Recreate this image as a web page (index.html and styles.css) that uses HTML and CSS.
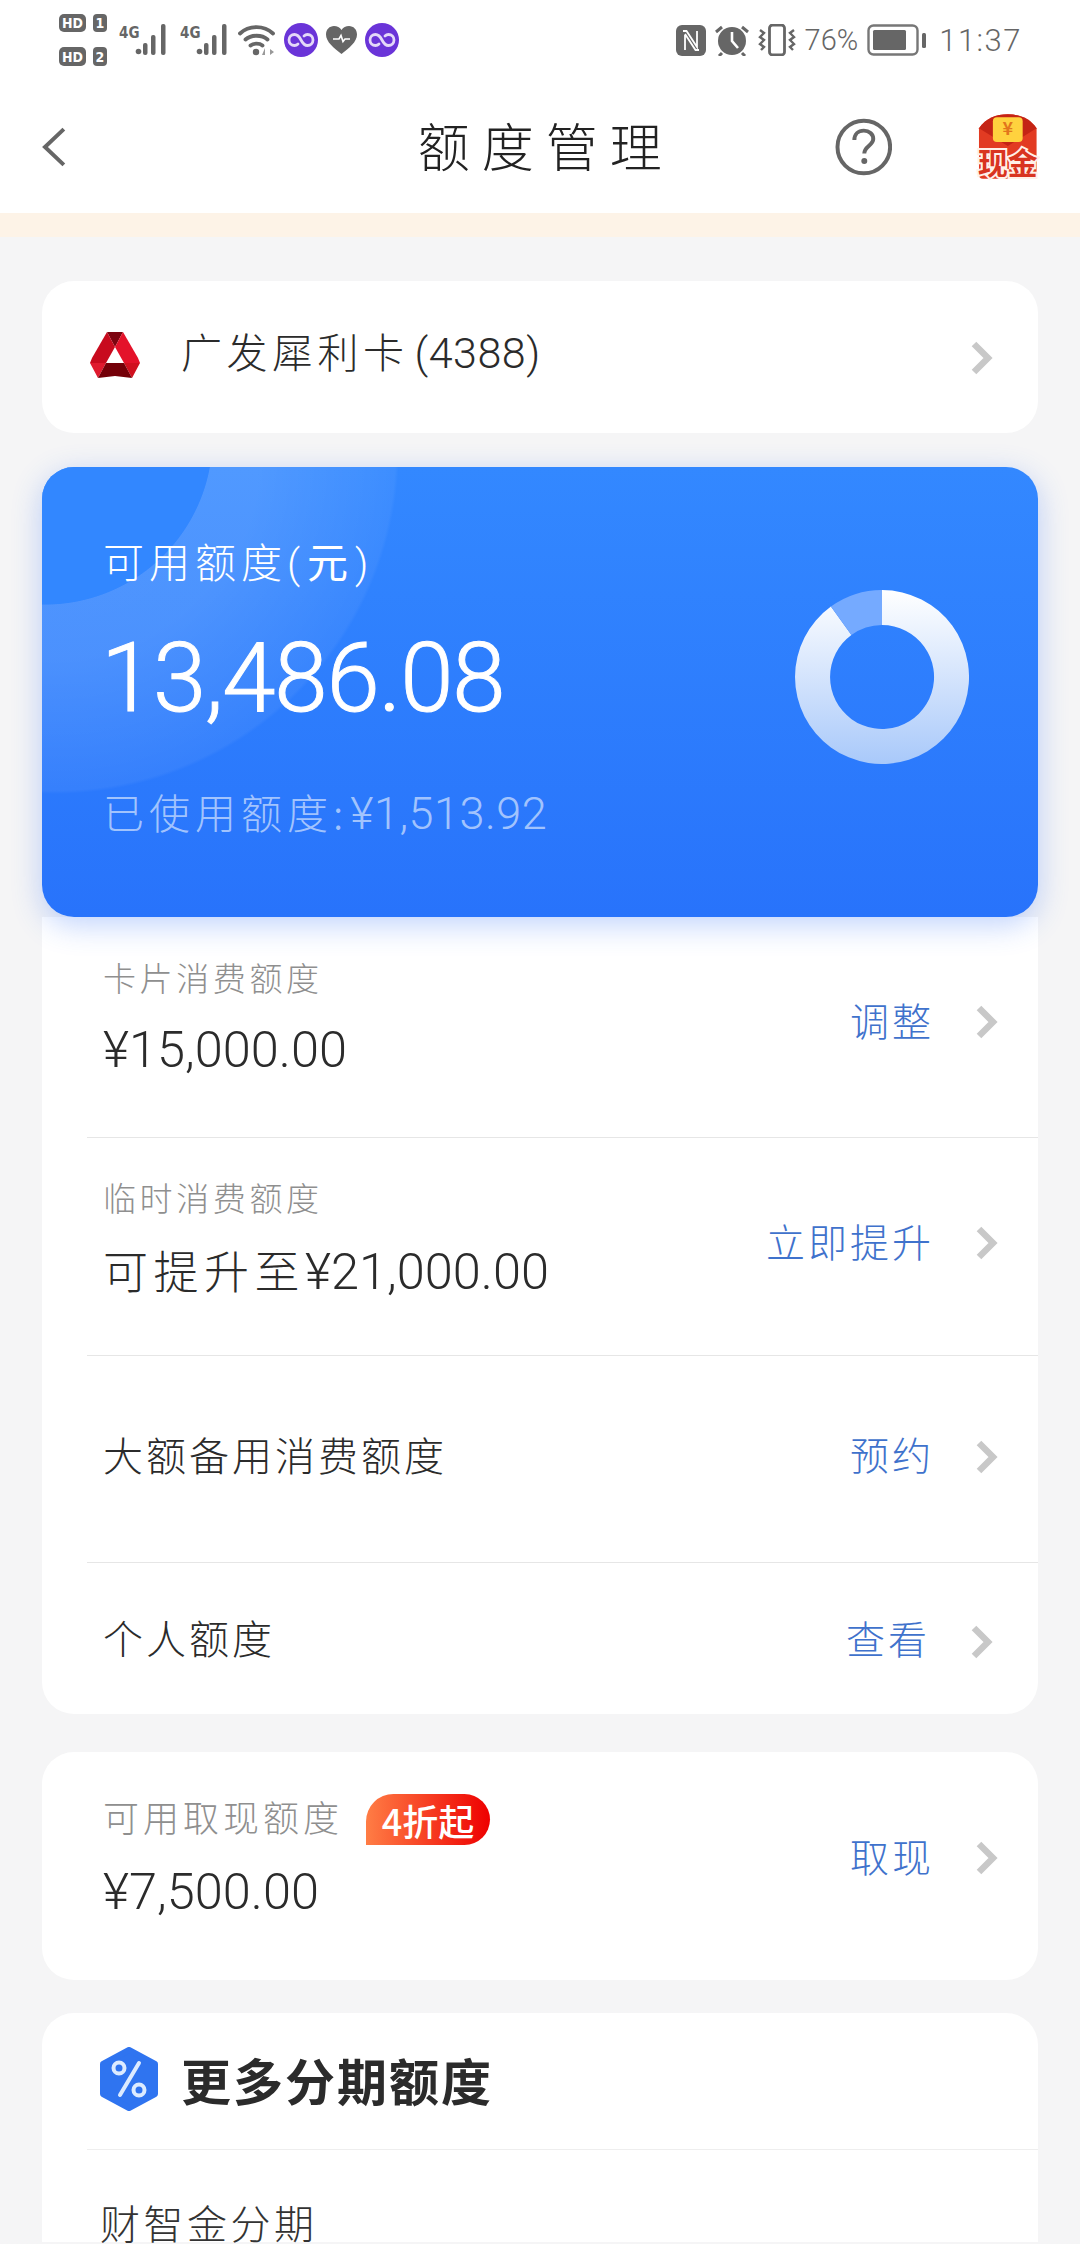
FILE: index.html
```html
<!DOCTYPE html>
<html lang="zh-CN">
<head>
	<meta charset="UTF-8">
	<title>额度管理</title>
	<meta name="viewport" content="width=device-width, initial-scale=1">
	<link rel="stylesheet" href="styles.css">
</head>
<body>
<div class="status">
	<div class="status-left">
		<svg class="ic-sim" width="50" height="54" viewBox="0 0 50 54">
			<rect x="0" y="1" width="27" height="18" rx="5" fill="#666"/>
			<rect x="34" y="1" width="14" height="18" rx="4" fill="#666"/>
			<rect x="0" y="34" width="27" height="19" rx="5" fill="#666"/>
			<rect x="34" y="34" width="14" height="19" rx="4" fill="#666"/>
			<text x="13.5" y="15" class="sim-text">HD</text>
			<text x="41" y="15" class="sim-text">1</text>
			<text x="13.5" y="49" class="sim-text">HD</text>
			<text x="41" y="49" class="sim-text">2</text>
		</svg>
		<svg class="ic-signal" width="50" height="32" viewBox="0 0 50 32">
			<text x="0" y="14" class="net-text">4G</text>
			<circle cx="19.500" cy="27.500" r="2.800" fill="#666"/>
			<rect x="24" y="19" width="4.500" height="12" rx="2" fill="#666"/>
			<rect x="32" y="11" width="4.500" height="20" rx="2" fill="#666"/>
			<rect x="42" y="0" width="4.500" height="31" rx="2" fill="#666"/>
		</svg>
		<svg class="ic-signal ic-signal-2" width="50" height="32" viewBox="0 0 50 32">
			<text x="0" y="14" class="net-text">4G</text>
			<circle cx="19.500" cy="27.500" r="2.800" fill="#666"/>
			<rect x="24" y="19" width="4.500" height="12" rx="2" fill="#666"/>
			<rect x="32" y="11" width="4.500" height="20" rx="2" fill="#666"/>
			<rect x="42" y="0" width="4.500" height="31" rx="2" fill="#666"/>
		</svg>
		<svg class="ic-wifi" width="38" height="32" viewBox="0 0 38 32">
			<g fill="none" stroke="#666" stroke-width="3.800" stroke-linecap="round">
				<path d="M2 9.500C11 1 26 1 35 9.500"/>
				<path d="M7.500 15.500C13 10.500 24 10.500 29.500 15.500"/>
				<path d="M12.500 21.500C15.500 19 21.500 19 24.500 21.500"/>
			</g>
			<circle cx="18" cy="28" r="3.200" fill="#666"/>
			<path d="M27 31V24l-3 7zM32 25v6l4-3z" fill="#999"/>
		</svg>
		<svg class="ic-loop" width="34" height="34" viewBox="0 0 34 34">
			<circle cx="17" cy="17" r="17" fill="#6a34d8"/>
			<path d="M17 17c-2-4-4-5.500-6.500-5.500a5.500 5.500 0 0 0 0 11c1.500 0 2.500-.5 3.500-1.500M17 17c2 4 4 5.500 6.500 5.500a5.500 5.500 0 0 0 0-11c-1.500 0-2.500.5-3.500 1.500" fill="none" stroke="#e4d8f8" stroke-width="2.800" stroke-linecap="round"/>
		</svg>
		<svg class="ic-heart" width="31" height="28" viewBox="0 0 31 28">
			<path d="M15.500 28C8 22 0 16 0 8.500 0 3.500 3.500 0 8 0c3 0 6 1.500 7.500 4C17 1.500 20 0 23 0c4.500 0 8 3.500 8 8.500C31 16 23 22 15.500 28z" fill="#666"/>
			<path d="M7 13h6l2-3.500 2 6 2-2.500h5" fill="none" stroke="#fff" stroke-width="1.600"/>
		</svg>
		<svg class="ic-loop" width="34" height="34" viewBox="0 0 34 34">
			<circle cx="17" cy="17" r="17" fill="#6a34d8"/>
			<path d="M17 17c-2-4-4-5.500-6.500-5.500a5.500 5.500 0 0 0 0 11c1.500 0 2.500-.5 3.500-1.500M17 17c2 4 4 5.500 6.500 5.500a5.500 5.500 0 0 0 0-11c-1.500 0-2.500.5-3.500 1.500" fill="none" stroke="#e4d8f8" stroke-width="2.800" stroke-linecap="round"/>
		</svg>
	</div>
	<div class="status-right">
		<svg width="30" height="31" viewBox="0 0 30 31">
			<rect width="30" height="31" rx="6" fill="#666"/>
			<path d="M7 6h3.500L21 22V6M9 25V10M23 25h-3.500L9 9" fill="none" stroke="#fff" stroke-width="1.800"/>
		</svg>
		<svg class="ic-alarm" width="34" height="32" viewBox="0 0 34 32">
			<circle cx="17" cy="17" r="14" fill="#666"/>
			<path d="M17 8v9l6 7" fill="none" stroke="#fff" stroke-width="2.600"/>
			<path d="M1 8l6-5M33 8l-6-5M7 29l-3 3M27 29l3 3" stroke="#666" stroke-width="3" fill="none"/>
		</svg>
		<svg class="ic-vibrate" width="38" height="32" viewBox="0 0 38 32">
			<rect x="11.500" y="1" width="15" height="30" rx="3" fill="none" stroke="#666" stroke-width="2.800"/>
			<path d="M2 6l4 3-4 4 4 3-4 4 4 3-3 3M36 6l-4 3 4 4-4 3 4 4-4 3 3 3" fill="none" stroke="#666" stroke-width="2.400"/>
		</svg>
		<span class="battery-pct">76%</span>
		<svg class="ic-battery" width="59" height="32" viewBox="0 0 59 32">
			<rect x="1.500" y="1.500" width="49" height="29" rx="5" fill="none" stroke="#777" stroke-width="2.400"/>
			<rect x="6" y="6" width="33" height="20" rx="1.500" fill="#666"/>
			<rect x="55" y="9" width="4" height="15" rx="1.500" fill="#666"/>
		</svg>
		<span class="clock">11:37</span>
	</div>
</div>

<header class="nav">
	<svg class="nav-back" width="24" height="40" viewBox="0 0 24 40">
		<path d="M22 2L3 20l19 18" fill="none" stroke="#666" stroke-width="4"/>
	</svg>
	<h1 class="nav-title">额度管理</h1>
	<svg class="nav-help" width="58" height="58" viewBox="0 0 58 58">
		<circle cx="29" cy="29" r="26.500" fill="none" stroke="#666" stroke-width="4"/>
		<path d="M19.500 22c0-6 4-9.500 9.500-9.500s9.500 3.500 9.500 8.500c0 6.500-9 7-9 14.500" fill="none" stroke="#666" stroke-width="4"/>
		<circle cx="29.500" cy="43" r="3" fill="#666"/>
	</svg>
	<svg class="nav-cash" width="64" height="72" viewBox="0 0 64 72">
		<path d="M3 14C10 4 20 0 32 0s22 4 29 14v47a4 4 0 0 1-4 4H7a4 4 0 0 1-4-4z" fill="#e23b22"/>
		<path d="M3 14C10 4 20 0 32 0s22 4 29 14L32 32z" fill="#c42415"/>
		<rect x="17" y="3" width="30" height="25" rx="4" fill="#ffd23e"/>
		<text x="32" y="21" class="cash-yen">¥</text>
		<text x="32" y="60" class="cash-text">现金</text>
	</svg>
</header>
<div class="notice"></div>

<main class="content">
	<section class="card card-bank">
		<svg class="bank-logo" width="50" height="46" viewBox="0 0 50 46">
			<path d="M17 0h16L25 15z" fill="#7d0410"/>
			<path d="M17 0l8 15-9 16H0l2-5z" fill="#c80b1e"/>
			<path d="M33 0l-8 15 9 16h16l-2-5z" fill="#e4122a"/>
			<path d="M0 31h16l-8 15z" fill="#e01a2e"/>
			<path d="M50 31H34l8 15z" fill="#d0101f"/>
			<path d="M16 31h18l8 15-17-2-17 2z" fill="#740008"/>
		</svg>
		<span class="bank-name">广发犀利卡<span class="bank-no">(4388)</span></span>
		<svg class="chevron" width="24" height="34" viewBox="0 0 24 34">
			<path d="M4 3l14 14L4 31" fill="none" stroke="#c8c8c8" stroke-width="6.500"/>
		</svg>
	</section>

	<section class="limit-card">
		<div class="limit-text">
			<p class="limit-label">可用额度<span class="paren">(元)</span></p>
			<p class="limit-amount">13,486.08</p>
			<p class="limit-used">已使用额度:<span class="num">¥1,513.92</span></p>
		</div>
		<svg class="donut" width="174" height="174" viewBox="0 0 174 174">
			<defs>
				<linearGradient id="donut-fill" x1="0" y1="0" x2="0" y2="1">
					<stop offset="0" stop-color="#fff"/>
					<stop offset="1" stop-color="#a9c9fa"/>
				</linearGradient>
			</defs>
			<path d="M87 0a87 87 0 1 1-51.100 16.600L56.400 45A52 52 0 1 0 87 35z" fill="url(#donut-fill)"/>
			<path d="M87 0a87 87 0 0 0-51.100 16.600L56.400 45A52 52 0 0 1 87 35z" fill="#75aaff"/>
		</svg>
	</section>

	<section class="card card-list">
		<div class="row row-a">
			<div class="row-text">
				<p class="row-label">卡片消费额度</p>
				<p class="row-value">¥15,000.00</p>
			</div>
			<span class="row-action">调整</span>
			<svg class="chevron" width="24" height="34" viewBox="0 0 24 34">
				<path d="M4 3l14 14L4 31" fill="none" stroke="#c8c8c8" stroke-width="6.500"/>
			</svg>
		</div>
		<div class="row row-b">
			<div class="row-text">
				<p class="row-label">临时消费额度</p>
				<p class="row-value"><span class="row-cjk">可提升至</span>¥21,000.00</p>
			</div>
			<span class="row-action">立即提升</span>
			<svg class="chevron" width="24" height="34" viewBox="0 0 24 34">
				<path d="M4 3l14 14L4 31" fill="none" stroke="#c8c8c8" stroke-width="6.500"/>
			</svg>
		</div>
		<div class="row row-c">
			<p class="row-title">大额备用消费额度</p>
			<span class="row-action">预约</span>
			<svg class="chevron" width="24" height="34" viewBox="0 0 24 34">
				<path d="M4 3l14 14L4 31" fill="none" stroke="#c8c8c8" stroke-width="6.500"/>
			</svg>
		</div>
		<div class="row row-d">
			<p class="row-title">个人额度</p>
			<span class="row-action">查看</span>
			<svg class="chevron" width="24" height="34" viewBox="0 0 24 34">
				<path d="M4 3l14 14L4 31" fill="none" stroke="#c8c8c8" stroke-width="6.500"/>
			</svg>
		</div>
	</section>

	<section class="card card-cash">
		<div class="row row-e">
			<div class="row-text">
				<p class="row-label row-label-big">可用取现额度<span class="badge">4折起</span></p>
				<p class="row-value">¥7,500.00</p>
			</div>
			<span class="row-action">取现</span>
			<svg class="chevron" width="24" height="34" viewBox="0 0 24 34">
				<path d="M4 3l14 14L4 31" fill="none" stroke="#c8c8c8" stroke-width="6.500"/>
			</svg>
		</div>
	</section>

	<section class="card card-more">
		<div class="more-head">
			<svg width="58" height="64" viewBox="0 0 58 64">
				<path d="M29 3L55 17v30L29 61 3 47V17z" fill="#2f74f0" stroke="#2f74f0" stroke-width="6" stroke-linejoin="round"/>
				<circle cx="19" cy="21" r="5.500" fill="none" stroke="#dcebff" stroke-width="4"/>
				<circle cx="39" cy="43" r="5.500" fill="none" stroke="#dcebff" stroke-width="4"/>
				<path d="M39 16L20 48" stroke="#dcebff" stroke-width="4" stroke-linecap="round"/>
			</svg>
			<h2 class="more-title">更多分期额度</h2>
		</div>
		<p class="more-item">财智金分期</p>
	</section>
</main>
</body>
</html>
```

FILE: styles.css
```css
* {
	box-sizing: border-box;
}
html,
body {
	margin: 0;
	height: 2244px;
	overflow: hidden;
}
body {
	background: #f5f5f6;
	color: #2b2b2b;
	font-family: Roboto, "Noto Sans CJK SC", sans-serif;
	font-weight: 300;
}
p,
h1,
h2 {
	margin: 0;
}

/* status bar */
.status {
	height: 72px;
	background: #fff;
	display: flex;
	justify-content: space-between;
	align-items: center;
	padding: 8px 58px 0 59px;
}
.status svg {
	display: block;
	flex: none;
}
.status-left,
.status-right {
	display: flex;
	align-items: center;
}
.status-left {
	gap: 8px;
}
.ic-sim {
	margin-right: 2px;
}
.ic-signal-2 {
	margin-left: 3px;
}
.sim-text {
	font: 700 14px "DejaVu Sans Condensed", "DejaVu Sans", sans-serif;
	fill: #fff;
	text-anchor: middle;
}
.net-text {
	font: 700 15px "DejaVu Sans Condensed", "DejaVu Sans", sans-serif;
	fill: #666;
}
.status-right {
	gap: 9px;
	color: #666;
}
.battery-pct {
	font-size: 29px;
}
.clock {
	font-size: 31px;
	letter-spacing: 1.500px;
	margin-left: 4px;
}

/* nav */
.nav {
	height: 141px;
	background: #fff;
	display: flex;
	align-items: center;
	padding: 4px 40px 0 42px;
}
.nav-back,
.nav-help {
	margin-top: 4px;
}
.nav-title {
	font-family: "Noto Sans CJK SC", sans-serif;
	font-size: 52px;
	font-weight: 300;
	letter-spacing: 12px;
	white-space: nowrap;
	margin-left: 352px;
	color: #222;
}
.nav-help {
	margin-left: 161px;
}
.nav-cash {
	margin-left: 84px;
	margin-top: 11px;
}
.cash-yen {
	font: 700 18px "Noto Sans CJK SC", sans-serif;
	fill: #e2761c;
	text-anchor: middle;
}
.cash-text {
	font: 700 30px "Noto Sans CJK SC", sans-serif;
	fill: #d93420;
	stroke: #fff0e8;
	stroke-width: 4px;
	paint-order: stroke;
	text-anchor: middle;
}
.notice {
	height: 24px;
	background: #fdf3e7;
}

/* cards */
.content {
	padding: 44px 42px 0;
	display: flex;
	flex-direction: column;
}
.card {
	background: #fff;
	border-radius: 32px;
}
.card-bank {
	height: 152px;
	display: flex;
	align-items: center;
	padding: 0 44px 0 48px;
	margin-bottom: 34px;
}
.bank-logo {
	margin-top: -4px;
}
.bank-name {
	font-family: "Noto Sans CJK SC", sans-serif;
	font-size: 41px;
	letter-spacing: 4.500px;
	margin-left: 41px;
	margin-top: -14px;
	color: #2b2b2b;
}
.bank-no {
	font-family: Roboto, sans-serif;
	font-size: 43px;
	letter-spacing: 0.500px;
	margin-left: 6px;
}
.chevron {
	display: block;
	flex: none;
	margin-top: 6px;
}
.card-bank .chevron {
	margin-left: auto;
	margin-top: 2px;
}

/* blue limit card */
.limit-card {
	height: 450px;
	position: relative;
	z-index: 1;
	border-radius: 32px;
	background: linear-gradient(#3388ff, #2873fb);
	box-shadow: 0 8px 30px rgba(45, 110, 250, .3);
	display: flex;
	justify-content: space-between;
	padding: 0 69px 0 61px;
	color: #fff;
}
.limit-card::before {
	content: "";
	position: absolute;
	left: 0;
	top: 0;
	width: 358px;
	height: 330px;
	border-radius: 32px 0 0 0;
	background: radial-gradient(circle 344px at 13px -17px, rgba(255, 255, 255, .15) 0, rgba(255, 255, 255, .14) 60%, rgba(255, 255, 255, .05) 99%, transparent 100%);
}
.limit-card::after {
	content: "";
	position: absolute;
	left: 0;
	top: 0;
	width: 172px;
	height: 140px;
	border-radius: 32px 0 0 0;
	background: radial-gradient(circle 168px at 3px -30px, #3287ff 99.5%, transparent 100%);
}
.limit-text,
.donut {
	position: relative;
	z-index: 1;
}
.limit-text {
	font-family: "Noto Sans CJK SC", sans-serif;
}
.limit-label {
	margin-top: 64px;
	font-size: 41px;
	line-height: 58px;
	letter-spacing: 5px;
}
.paren {
	font-family: Roboto, sans-serif;
	letter-spacing: 7px;
}
.limit-amount {
	font-family: Roboto, sans-serif;
	font-size: 96px;
	line-height: 112px;
	margin: 29px 0 0 -2px;
	letter-spacing: -1.200px;
	-webkit-text-stroke: 1px #fff;
}
.limit-used {
	font-size: 41px;
	line-height: 56px;
	margin-top: 49px;
	letter-spacing: 5px;
	color: rgba(255, 255, 255, .58);
}
.num {
	font-family: Roboto, sans-serif;
	font-size: 45px;
	letter-spacing: 0.500px;
	margin-left: 2px;
}
.donut {
	margin-top: 123px;
}

/* rows */
.card-list {
	border-radius: 0 0 32px 32px;
	margin-bottom: 38px;
}
.row {
	display: flex;
	align-items: center;
	margin-left: 45px;
	padding-left: 16px;
	padding-right: 39px;
	border-bottom: 1px solid #e6e6e6;
}
.row-text {
	flex: 1;
}
.row-label {
	font-family: "Noto Sans CJK SC", sans-serif;
	font-size: 33px;
	line-height: 44px;
	letter-spacing: 3.600px;
	color: #8f8f8f;
	margin-bottom: 23px;
}
.row-label-big {
	font-size: 36px;
	letter-spacing: 4px;
	display: flex;
	align-items: center;
}
.row-value {
	font-size: 50.500px;
	line-height: 56px;
	margin-top: 1px;
	color: #2b2b2b;
}
.row-cjk {
	font-family: "Noto Sans CJK SC", sans-serif;
	font-size: 45px;
	letter-spacing: 5.500px;
}
.row-title {
	flex: 1;
	font-family: "Noto Sans CJK SC", sans-serif;
	font-size: 40px;
	letter-spacing: 3px;
	color: #2b2b2b;
}
.row-action {
	font-family: "Noto Sans CJK SC", sans-serif;
	font-size: 39px;
	letter-spacing: 3px;
	color: #3f72cc;
	margin-right: 41px;
}
.row-a,
.row-b {
	padding-top: 38px;
}
.row-a {
	height: 221px;
	padding-bottom: 60px;
}
.row-b {
	height: 218px;
	padding-bottom: 57px;
}
.row-a .row-action,
.row-b .row-action {
	margin-top: 6px;
}
.row-a .chevron,
.row-b .chevron {
	margin-top: 11px;
}
.row-c {
	height: 207px;
	padding-bottom: 10px;
}
.row-c .row-action {
	margin-bottom: 2px;
}
.row-d {
	height: 151px;
	border-bottom: 0;
	padding-bottom: 4px;
	padding-right: 44px;
}
.row-d .row-action {
	margin-right: 40px;
}
.row-d .chevron {
	margin-top: 10px;
}
.row-e {
	height: 228px;
	border-bottom: 0;
	padding-bottom: 22px;
}
.badge {
	width: 124px;
	height: 51px;
	margin: 4px 0 -4px 23px;
	border-radius: 28px 26px 26px 0;
	background: linear-gradient(90deg, #ff7d45, #ee0000);
	color: #fff;
	font-size: 36px;
	font-weight: 500;
	letter-spacing: 0;
	display: flex;
	justify-content: center;
	align-items: center;
}
.card-cash {
	margin-bottom: 33px;
}

/* more */
.card-more {
	border-radius: 32px 32px 0 0;
}
.more-head {
	display: flex;
	align-items: center;
	gap: 23px;
	height: 137px;
	margin-left: 45px;
	padding: 0 0 4px 13px;
	border-bottom: 1px solid #eeeeee;
}
.more-title {
	font-family: "Noto Sans CJK SC", sans-serif;
	font-size: 50px;
	font-weight: 700;
	letter-spacing: 2px;
	color: #2b2b2b;
}
.more-item {
	font-family: "Noto Sans CJK SC", sans-serif;
	font-size: 40px;
	line-height: 40px;
	letter-spacing: 3.500px;
	margin: 52px 0 0 58px;
	color: #333;
}
```
